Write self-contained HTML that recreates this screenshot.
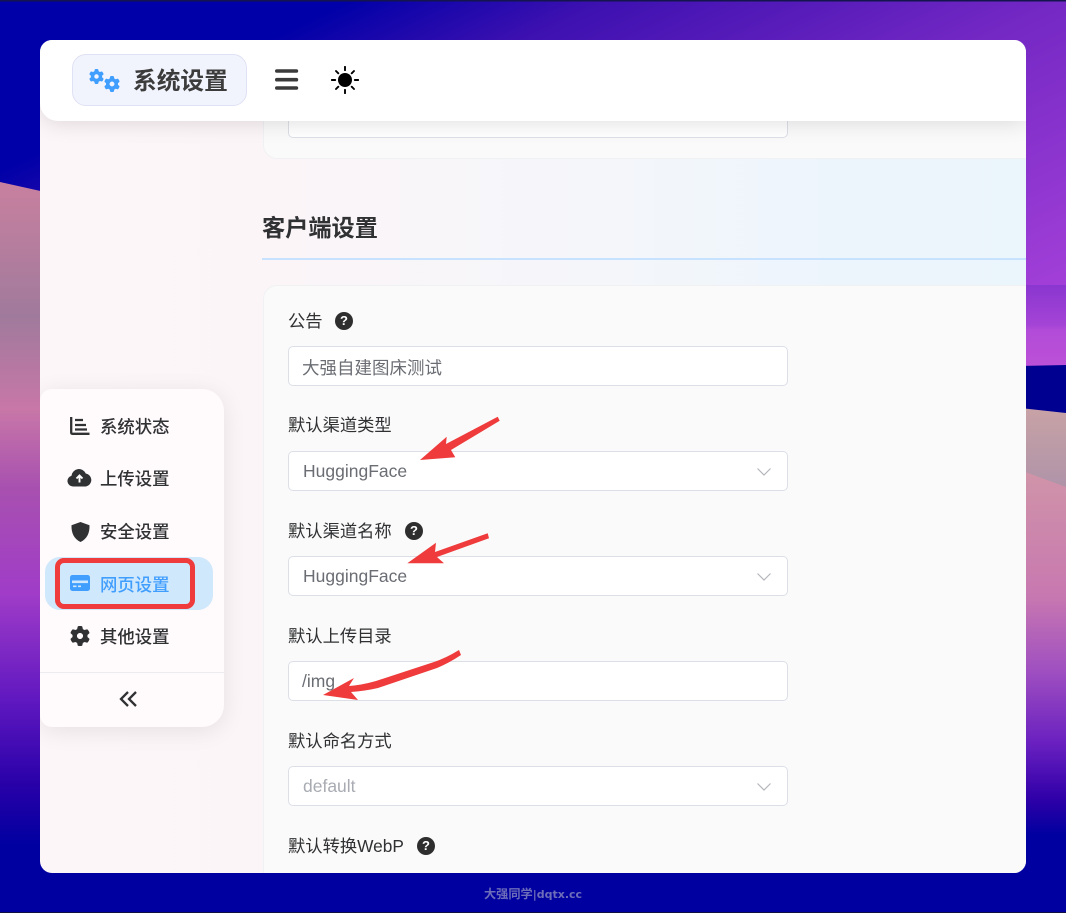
<!DOCTYPE html>
<html lang="zh">
<head>
<meta charset="utf-8">
<title>系统设置</title>
<style>
html,body{margin:0;padding:0;width:1066px;height:913px;overflow:hidden;background:#0000a0}
body{position:relative;font-family:"Liberation Sans","Noto Sans CJK SC",sans-serif;color:#303133}
.bg{position:absolute;left:0;top:0}
.win{position:absolute;left:40px;top:40px;width:986px;height:833px;border-radius:12px;overflow:hidden;background:linear-gradient(90deg,#fdf6f8 0,#fbf5f8 25%,#f5f6fa 55%,#edf5fc 80%,#ebf5fc 100%)}
.abs{position:absolute;white-space:nowrap}
.card{position:absolute;left:223px;width:800px;background:#fafafa;border:1px solid #f0f1f3;border-radius:14px;box-sizing:border-box}
.input{position:absolute;left:248px;width:500px;height:40px;box-sizing:border-box;background:#fff;border:1px solid #dcdfe6;border-radius:5px}
.val{position:absolute;left:263px;font-size:17.5px;line-height:24px;color:#6a6d73;white-space:nowrap}
.lab{position:absolute;left:248px;font-size:17.3px;line-height:24px;color:#303133;white-space:nowrap}
.q{position:absolute;width:18px;height:18px;border-radius:50%;background:#2e2e2e;color:#fff;font-size:13px;font-weight:700;line-height:18px;text-align:center}
.topbar{position:absolute;left:0;top:0;width:986px;height:81px;background:#fff;border-bottom-left-radius:18px;box-shadow:0 2px 22px rgba(0,0,0,.13)}
.chip{position:absolute;left:32px;top:14px;width:175px;height:52px;box-sizing:border-box;background:#f2f4fd;border:1px solid #dfe1f4;border-radius:14px}
.side{position:absolute;left:0;top:349px;width:184px;height:338px;background:#fffafc;border-radius:12px 22px 22px 12px;box-shadow:0 4px 24px rgba(0,0,0,.09)}
.pill{position:absolute;left:5px;top:168px;width:168px;height:53px;background:#cfe8fc;border-radius:15px}
.item{position:absolute;left:60px;font-size:17.4px;line-height:24px;color:#303133;font-weight:500;white-space:nowrap}
.foot{position:absolute;left:0;top:885px;width:1066px;text-align:center;font-size:12.2px;line-height:18px;font-weight:700;color:#6d6db9}
.foot span{font-family:"DejaVu Sans",sans-serif;font-size:11px}
svg{display:block}
</style>
</head>
<body>
<svg class="bg" width="1066" height="913" viewBox="0 0 1066 913">
  <defs>
    <linearGradient id="sky" gradientUnits="userSpaceOnUse" x1="350" y1="0" x2="599" y2="511">
      <stop offset="0" stop-color="#0000a8"/><stop offset=".19" stop-color="#3c10b0"/><stop offset=".55" stop-color="#7428c4"/><stop offset="1" stop-color="#a23fd8"/>
    </linearGradient>
    <linearGradient id="band" gradientUnits="userSpaceOnUse" x1="0" y1="285" x2="0" y2="366">
      <stop offset="0" stop-color="#8a36d0"/><stop offset=".5" stop-color="#a544d6"/><stop offset=".56" stop-color="#b24cd8"/><stop offset="1" stop-color="#bc50d8"/>
    </linearGradient>
    <linearGradient id="hl" gradientUnits="userSpaceOnUse" x1="0" y1="185" x2="0" y2="845">
      <stop offset="0" stop-color="#c8809f"/><stop offset=".2" stop-color="#a07a9c"/><stop offset=".34" stop-color="#c877a8"/><stop offset=".46" stop-color="#a850b0"/><stop offset=".62" stop-color="#a03cc8"/><stop offset=".78" stop-color="#6018c0"/><stop offset=".91" stop-color="#2800a8"/><stop offset="1" stop-color="#0000a0"/>
    </linearGradient>
    <linearGradient id="hr1" gradientUnits="userSpaceOnUse" x1="0" y1="408" x2="0" y2="490">
      <stop offset="0" stop-color="#c8a2a6"/><stop offset="1" stop-color="#ae93a8"/>
    </linearGradient>
    <linearGradient id="hr2" gradientUnits="userSpaceOnUse" x1="0" y1="468" x2="0" y2="835">
      <stop offset="0" stop-color="#d095a8"/><stop offset=".35" stop-color="#c878b0"/><stop offset=".55" stop-color="#a050c0"/><stop offset=".75" stop-color="#6a20c0"/><stop offset=".9" stop-color="#3000a8"/><stop offset="1" stop-color="#0000a0"/>
    </linearGradient>
  </defs>
  <rect width="1066" height="913" fill="#0000a0"/>
  <rect width="1066" height="340" fill="url(#sky)"/>
  <rect x="1020" y="285" width="46" height="81" fill="url(#band)"/>
  <polygon points="1020,366 1066,365 1066,420 1020,420" fill="#000090"/>
  <polygon points="0,182 45,192 45,900 0,900" fill="url(#hl)"/>
  <polygon points="1020,408 1066,413 1066,500 1020,500" fill="url(#hr1)"/>
  <polygon points="1020,470 1066,487 1066,840 1020,840" fill="url(#hr2)"/>
  <rect y="0" width="1066" height="1.5" fill="#14144e"/>
  <rect y="912" width="1066" height="1" fill="#101040"/>
  <symbol id="gear" viewBox="0 0 512 512"><path fill-rule="evenodd" d="M495.9 166.6c3.2 8.7 .5 18.4-6.4 24.6l-43.3 39.4c1.1 8.3 1.7 16.8 1.7 25.4s-.6 17.1-1.7 25.4l43.3 39.4c6.9 6.2 9.6 15.9 6.4 24.6c-4.4 11.9-9.7 23.3-15.8 34.3l-4.7 8.1c-6.6 11-14 21.4-22.1 31.2c-5.9 7.2-15.7 9.6-24.5 6.8l-55.7-17.7c-13.4 10.3-28.2 18.9-44 25.4l-12.5 57.1c-2 9.1-9 16.3-18.2 17.8c-13.8 2.3-28 3.5-42.5 3.5s-28.7-1.2-42.5-3.5c-9.2-1.5-16.2-8.7-18.2-17.8l-12.5-57.1c-15.8-6.5-30.6-15.1-44-25.4L83.1 425.9c-8.8 2.8-18.6 .3-24.5-6.8c-8.1-9.8-15.5-20.2-22.1-31.2l-4.7-8.1c-6.1-11-11.4-22.4-15.8-34.3c-3.2-8.7-.5-18.4 6.4-24.6l43.3-39.4C64.6 273.1 64 264.6 64 256s.6-17.1 1.7-25.4L22.4 191.2c-6.9-6.2-9.6-15.9-6.4-24.6c4.4-11.9 9.7-23.3 15.8-34.3l4.7-8.1c6.6-11 14-21.4 22.1-31.2c5.9-7.2 15.7-9.6 24.5-6.8l55.7 17.7c13.4-10.3 28.2-18.9 44-25.4l12.5-57.1c2-9.1 9-16.3 18.2-17.8C227.3 1.2 241.500 0 256 0s28.700 1.200 42.500 3.500c9.200 1.500 16.200 8.700 18.200 17.800l12.500 57.100c15.800 6.500 30.600 15.100 44 25.400l55.700-17.700c8.800-2.800 18.600-.3 24.500 6.800c8.100 9.800 15.500 20.200 22.100 31.200l4.700 8.100c6.100 11 11.400 22.400 15.800 34.300zM256 336a80 80 0 1 0 0-160 80 80 0 1 0 0 160z"/></symbol>
  <symbol id="gearb" viewBox="0 0 512 512"><use href="#gear" width="512" height="512"/><circle cx="256" cy="256" r="100" fill="none" stroke="currentColor" stroke-width="40"/></symbol>
</svg>

<div class="win">
  <div class="card" style="top:40px;height:79px"></div>
  <div class="input" style="top:58px;height:40px"></div>

  <div class="abs" style="left:222px;top:172px;font-size:23.2px;line-height:32px;font-weight:700;color:#303133">客户端设置</div>
  <div class="abs" style="left:222px;top:218px;width:764px;height:2px;background:#c6e2ff"></div>

  <div class="card" style="top:245px;height:640px"></div>

  <div class="lab" style="top:269px">公告</div>
  <div class="q" style="left:295px;top:272px">?</div>
  <div class="input" style="top:306px;height:40px"></div>
  <div class="val" style="top:316px;left:262px">大强自建图床测试</div>

  <div class="lab" style="top:373px">默认渠道类型</div>
  <div class="input" style="top:411px"></div>
  <div class="val" style="top:419px">HuggingFace</div>
  <svg class="abs" style="left:716px;top:427px" width="16" height="10" viewBox="0 0 16 10"><path d="M1.500 1.500L8 8l6.500-6.500" fill="none" stroke="#b4b6bb" stroke-width="1.200"/></svg>

  <div class="lab" style="top:479px">默认渠道名称</div>
  <div class="q" style="left:365px;top:482px">?</div>
  <div class="input" style="top:516px"></div>
  <div class="val" style="top:524px">HuggingFace</div>
  <svg class="abs" style="left:716px;top:532px" width="16" height="10" viewBox="0 0 16 10"><path d="M1.500 1.500L8 8l6.500-6.500" fill="none" stroke="#b4b6bb" stroke-width="1.200"/></svg>

  <div class="lab" style="top:584px">默认上传目录</div>
  <div class="input" style="top:621px"></div>
  <div class="val" style="top:629px;left:262px">/img</div>

  <div class="lab" style="top:689px">默认命名方式</div>
  <div class="input" style="top:726px"></div>
  <div class="val" style="top:734px;color:#a8abb2">default</div>
  <svg class="abs" style="left:716px;top:742px" width="16" height="10" viewBox="0 0 16 10"><path d="M1.500 1.500L8 8l6.500-6.500" fill="none" stroke="#b4b6bb" stroke-width="1.200"/></svg>

  <div class="lab" style="top:794px">默认转换WebP</div>
  <div class="q" style="left:377px;top:797px">?</div>

  <div class="topbar">
    <div class="chip"></div>
    <svg class="abs" style="left:49px;top:29px;color:#409eff" width="15" height="15" fill="#409eff"><use href="#gearb" width="15" height="15"/></svg>
    <svg class="abs" style="left:64px;top:36px;color:#409eff" width="16" height="16" fill="#409eff"><use href="#gearb" width="16" height="16"/></svg>
    <div class="abs" style="left:93px;top:25px;font-size:23.7px;line-height:34px;font-weight:700;color:#3c3c3c">系统设置</div>
    <svg class="abs" style="left:234px;top:28px" width="25" height="24" viewBox="0 0 25 24"><path d="M2.800 3h19.600M2.800 11.700h19.600M2.800 20h19.600" stroke="#3a3a3a" stroke-width="3.600" stroke-linecap="round" fill="none"/></svg>
    <svg class="abs" style="left:291px;top:26px" width="28" height="28" viewBox="0 0 28 28"><circle cx="14" cy="14" r="7" fill="#000"/><path d="M14 .8v3.400M14 23.800v3.400M.8 14h3.400M23.800 14h3.400M5 5l2.300 2.300M20.700 20.700L23 23M23 5l-2.300 2.300M7.300 20.700L5 23" stroke="#000" stroke-width="1.900" stroke-linecap="round"/></svg>
  </div>

  <div class="side">
    <div class="pill"></div>
    <div class="abs" style="left:15px;top:169px;width:140px;height:51px;box-sizing:border-box;border:5px solid #ef3b3b;border-radius:9px"></div>

    <svg class="abs" style="left:30px;top:28px" width="20" height="18" viewBox="0 0 20 18"><path d="M1.200 0v15.500q0 1.300 1.300 1.300H19.500" fill="none" stroke="#303133" stroke-width="2.300"/><path d="M5 3h8M5 8h11M5 12.500h12" stroke="#303133" stroke-width="2.200" fill="none"/></svg>
    <div class="item" style="top:26px">系统状态</div>

    <svg class="abs" style="left:27px;top:79px" width="25" height="19" viewBox="0 0 25 19"><path d="M6 18.500a5.500 5.500 0 0 1-1.500-10.800A7.500 7.500 0 0 1 18.800 5.500a6.600 6.600 0 0 1 .2 13z" fill="#303133"/><path d="M12.500 14.500V8M9.500 10.500l3-3 3 3" stroke="#fff" stroke-width="1.900" fill="none"/></svg>
    <div class="item" style="top:78px">上传设置</div>

    <svg class="abs" style="left:31px;top:133px" width="19" height="20" viewBox="0 0 19 20"><path d="M9.500 0L18.500 3.300C18.800 11 16 17 9.500 20C3 17 .2 11 .5 3.300z" fill="#303133"/></svg>
    <div class="item" style="top:131px">安全设置</div>

    <svg class="abs" style="left:30px;top:186px" width="20" height="16" viewBox="0 0 20 16"><rect width="20" height="16" rx="2.500" fill="#409eff"/><rect x="2" y="5.500" width="16" height="2.600" fill="#cfe8fc"/><path d="M3 11.300h3.500M8 11.300h3" stroke="#cfe8fc" stroke-width="1.700"/></svg>
    <div class="item" style="top:184px;color:#409eff">网页设置</div>

    <svg class="abs" style="left:30px;top:237px;color:#303133" width="20" height="20" fill="#303133"><use href="#gearb" width="20" height="20"/></svg>
    <div class="item" style="top:236px">其他设置</div>

    <div class="abs" style="left:0;top:283px;width:184px;height:1px;background:#ececf0"></div>
    <svg class="abs" style="left:79px;top:301px" width="19" height="18" viewBox="0 0 19 18"><path d="M9 2L2 9l7 7M17 2l-7 7 7 7" fill="none" stroke="#303133" stroke-width="2.300"/></svg>
  </div>
</div>

<svg class="bg" width="1066" height="913" viewBox="0 0 1066 913" fill="#ef3b3b">
  <polygon points="497.700,416.700 499.700,420.700 451,450 455.300,457.300 420,460 446.700,436.700 446,444"/>
  <polygon points="487.700,533.300 489,538.300 437,557 444,563.300 407.300,563.300 436,542.700 435,552"/>
  <path d="M459 650Q446 658 434 662L376 681Q362 685 349 686L354 678L323 695L358 700L351 692Q365 691 378 688L437 668Q449 663 461 655Z"/>
</svg>

<div class="foot">大强同学<span>|dqtx.cc</span></div>
</body>
</html>
